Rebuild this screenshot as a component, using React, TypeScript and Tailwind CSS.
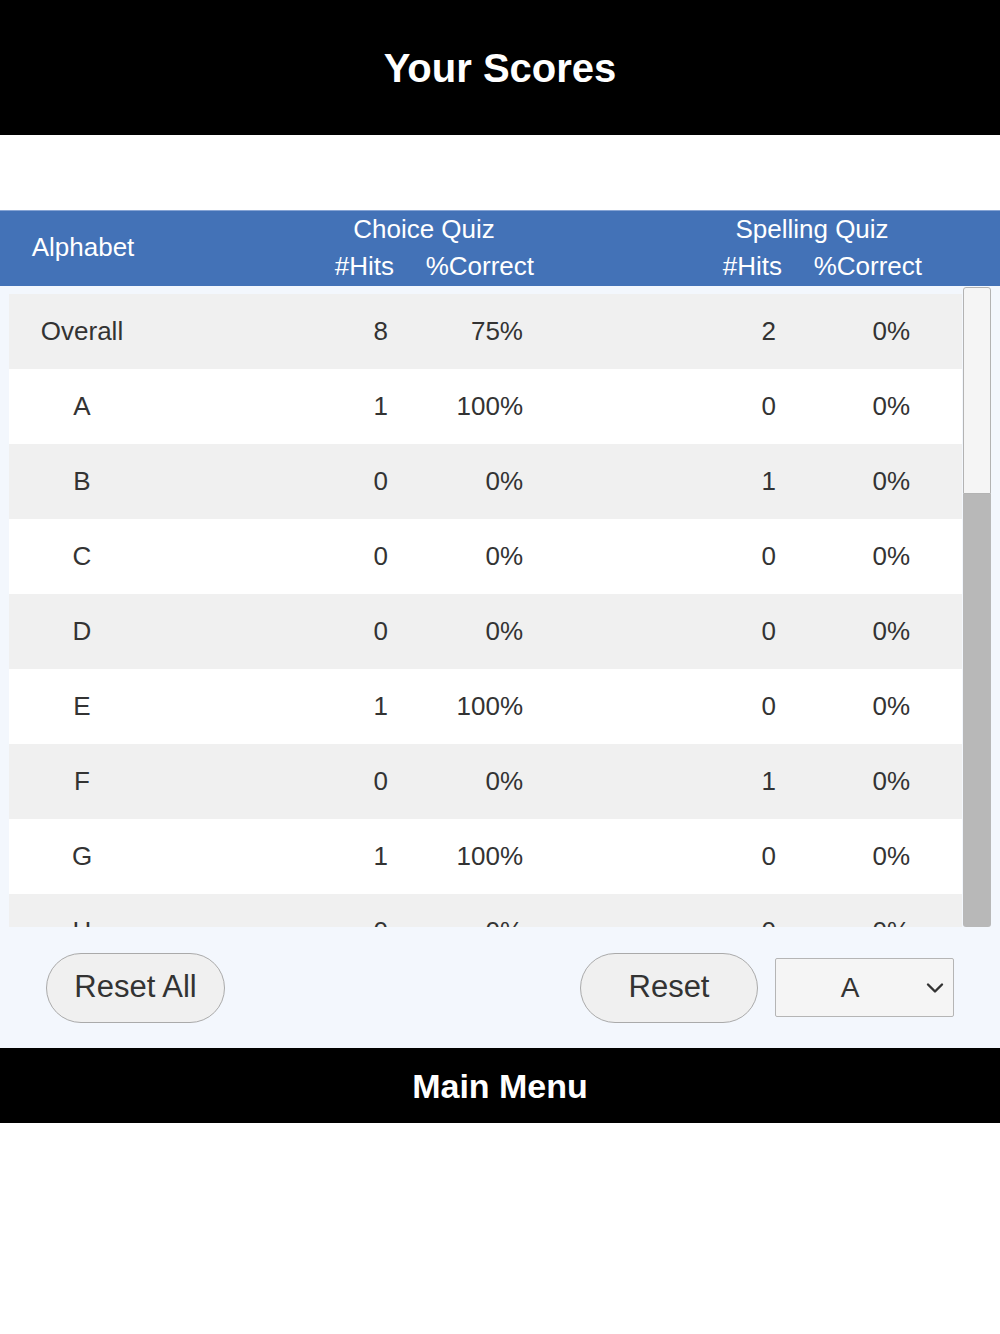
const rows: { label: string; ch: number; cp: string; sh: number; sp: string }[] = [
  { label: "Overall", ch: 8, cp: "75%", sh: 2, sp: "0%" },
  { label: "A", ch: 1, cp: "100%", sh: 0, sp: "0%" },
  { label: "B", ch: 0, cp: "0%", sh: 1, sp: "0%" },
  { label: "C", ch: 0, cp: "0%", sh: 0, sp: "0%" },
  { label: "D", ch: 0, cp: "0%", sh: 0, sp: "0%" },
  { label: "E", ch: 1, cp: "100%", sh: 0, sp: "0%" },
  { label: "F", ch: 0, cp: "0%", sh: 1, sp: "0%" },
  { label: "G", ch: 1, cp: "100%", sh: 0, sp: "0%" },
  { label: "H", ch: 0, cp: "0%", sh: 0, sp: "0%" },
];

const font = "font-['Liberation_Sans','Helvetica',Arial,sans-serif]";

const HeaderGroup = ({ title }: { title: string }): React.JSX.Element => (
  <div className="flex w-[228px] flex-col">
    <div className="h-[37px] text-center leading-[37px]">{title}</div>
    <div className="flex h-[37px] leading-[37px]">
      <div className="w-[84px] text-right">#Hits</div>
      <div className="w-[140px] text-right">%Correct</div>
    </div>
  </div>
);

export default function App(): React.JSX.Element {
  return (
    <div className={`${font} w-[1000px] min-h-[1334px] bg-white text-[#333]`}>
      <header className="flex h-[135px] items-center justify-center bg-black">
        <h1 className="text-[40px] font-bold leading-none text-white">Your Scores</h1>
      </header>

      <div className="h-[75px] bg-white" />

      <div className="flex h-[76px] border-t border-[#86a4d4] bg-[#4372b7] text-[26px] text-white">
        <div className="flex w-[166px] items-center justify-center pb-[2px]">Alphabet</div>
        <div className="ml-[144px]">
          <HeaderGroup title="Choice Quiz" />
        </div>
        <div className="ml-[160px]">
          <HeaderGroup title="Spelling Quiz" />
        </div>
      </div>

      <div className="bg-[#f3f7fd]">
        <div className="flex h-[641px]">
          <div className="ml-[9px] w-[953px] overflow-hidden pt-[8px]">
            {rows.map((r, i) => (
              <div
                key={r.label}
                className={`flex h-[75px] items-center text-[26px] ${i % 2 === 0 ? "bg-[#f0f0f0]" : "bg-white"}`}
              >
                <div className="w-[146px] text-center">{r.label}</div>
                <div className="w-[233px] text-right">{r.ch}</div>
                <div className="w-[135px] text-right">{r.cp}</div>
                <div className="w-[253px] text-right">{r.sh}</div>
                <div className="w-[134px] text-right">{r.sp}</div>
              </div>
            ))}
          </div>
          <div className="ml-[1px] mt-[1px] flex w-[28px] flex-col">
            <div className="h-[207px] rounded-t-[3px] border border-[#b3b3b3] bg-[#f5f5f5]" />
            <div className="flex-1 rounded-b-[3px] bg-[#b8b8b8]" />
          </div>
        </div>

        <div className="flex h-[121px] items-center">
          <button className="ml-[46px] h-[70px] w-[179px] rounded-full border border-[#aaa] bg-[#f0f0f0] text-[31px] text-[#333]">
            Reset All
          </button>
          <button className="ml-[355px] h-[70px] w-[178px] rounded-full border border-[#aaa] bg-[#f0f0f0] text-[31px] text-[#333]">
            Reset
          </button>
          <div className="relative ml-[17px] flex h-[59px] w-[179px] items-center rounded-[2px] border border-[#b5b5b5] bg-[#f5f5f5]">
            <span className="w-[148px] text-center text-[28px]">A</span>
            <svg width="18" height="12" viewBox="0 0 18 12" className="ml-[2px]">
              <path d="M2 2.5 L9 9.5 L16 2.5" fill="none" stroke="#333" strokeWidth="2.4" strokeLinecap="round" strokeLinejoin="round" />
            </svg>
          </div>
        </div>
      </div>

      <footer className="flex h-[75px] items-center justify-center bg-black">
        <span className="text-[34px] font-bold leading-none text-white">Main Menu</span>
      </footer>
    </div>
  );
}
